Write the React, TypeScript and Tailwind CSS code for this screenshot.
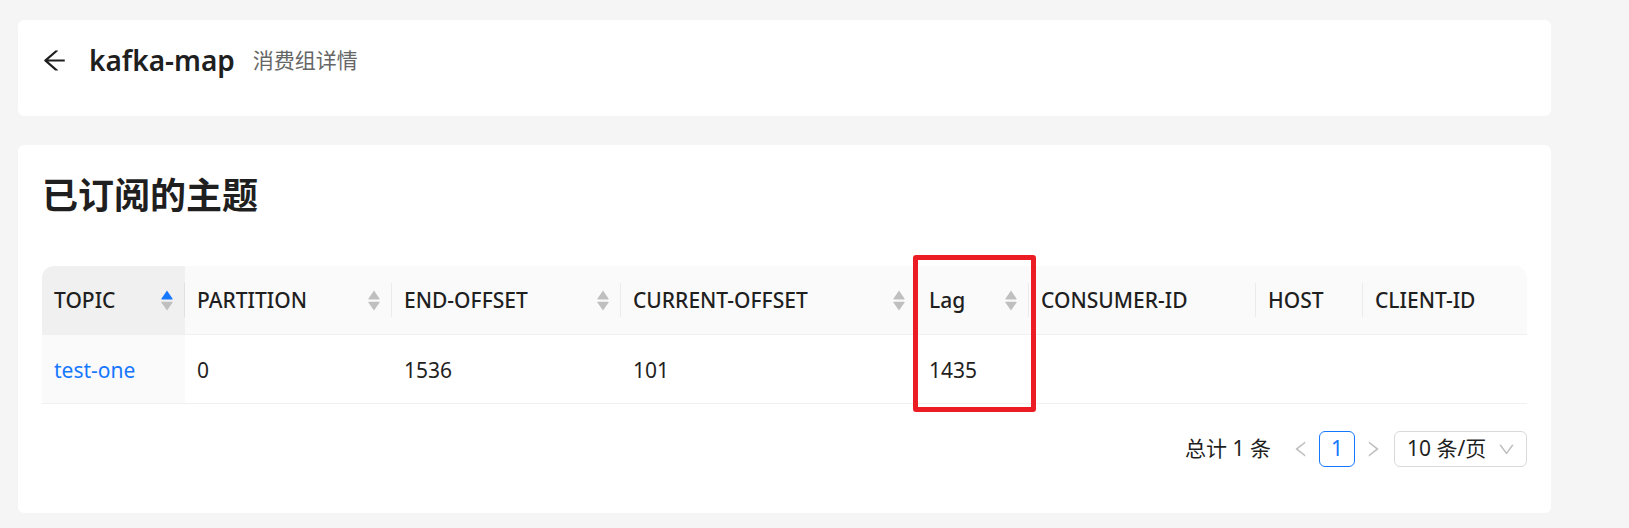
import React from "react";

const cols = [
  { key: "TOPIC", sort: "up" },
  { key: "PARTITION", sort: "none" },
  { key: "END-OFFSET", sort: "none" },
  { key: "CURRENT-OFFSET", sort: "none" },
  { key: "Lag", sort: "none" },
  { key: "CONSUMER-ID" },
  { key: "HOST" },
  { key: "CLIENT-ID" },
];

function SortIcon({ active }: { active?: boolean }) {
  return (
    <svg width="12" height="21" viewBox="0 0 12 21" className="shrink-0">
      <path d="M6 0.6 L11.6 8.8 Q11.9 9.4 11.2 9.4 L0.8 9.4 Q0.1 9.4 0.4 8.8 Z" fill={active ? "#1677ff" : "#bfbfbf"} />
      <path d="M0.8 11.8 L11.2 11.8 Q11.9 11.8 11.6 12.4 L6 20.5 L0.4 12.4 Q0.1 11.8 0.8 11.8 Z" fill="#bfbfbf" />
    </svg>
  );
}

export default function App() {
  return (
    <div className="min-h-screen w-full bg-[#f5f5f5] pt-[20px] font-['Noto_Sans','Noto_Sans_CJK_SC',sans-serif] text-[#1f1f1f]">
      <div className="ml-[18px] w-[1533px]">
        {/* Header card */}
        <div className="h-[96px] rounded-[6px] bg-white px-[24px] pt-[24px]">
          <div className="flex h-[32px] items-center">
            <svg width="25" height="25" viewBox="64 64 896 896" className="mr-[22px] shrink-0" fill="#1f1f1f">
              <path d="M872 474H286.9l350.3-304c5.6-4.9 2.2-14-5.2-14h-88.5c-3.9 0-7.6 1.4-10.5 3.9L155 487.8a31.96 31.96 0 000 48.3L535.1 866c1.5 1.3 3.3 2 5.2 2h91.5c7.4 0 10.8-9.2 5.2-14L286.9 550H872c4.4 0 8-3.6 8-8v-60c0-4.4-3.6-8-8-8z" />
            </svg>
            <span className="text-[28px] font-semibold leading-[32px]">kafka-map</span>
            <span className="ml-[18px] text-[21px] leading-[32px] text-[#666666]">消费组详情</span>
          </div>
        </div>

        {/* Content card */}
        <div className="mt-[29px] rounded-[6px] bg-white px-[24px] pb-[46px] pt-[24px]">
          <div className="text-[36px] font-bold leading-[54px]">已订阅的主题</div>

          <div className="relative mt-[43px]">
            <div className="grid grid-cols-[143px_207px_229px_296px_112px_227px_107px_1fr] text-[21px] leading-[33px]">
              {cols.map((c, i) => (
                <div
                  key={c.key}
                  className={`relative flex h-[69px] items-center justify-between border-b border-[#f0f0f0] px-[12px] pt-[1px] font-medium ${
                    i === 0 ? "rounded-tl-[12px] bg-[#f0f0f0]" : "bg-[#fafafa]"
                  } ${i === cols.length - 1 ? "rounded-tr-[12px]" : ""}`}
                >
                  <span>{c.key}</span>
                  {c.sort && <SortIcon active={c.sort === "up"} />}
                  {i < cols.length - 1 && (
                    <span className="absolute right-0 top-1/2 h-[34px] w-px -translate-y-1/2 bg-[#0000000f]" />
                  )}
                </div>
              ))}
              <div className="flex h-[69px] items-center border-b border-[#f0f0f0] bg-[#fafafa] px-[12px] pt-[3px] text-[#1677ff]">test-one</div>
              <div className="flex h-[69px] items-center border-b border-[#f0f0f0] px-[12px] pt-[3px]">0</div>
              <div className="flex h-[69px] items-center border-b border-[#f0f0f0] px-[12px] pt-[3px]">1536</div>
              <div className="flex h-[69px] items-center border-b border-[#f0f0f0] px-[12px] pt-[3px]">101</div>
              <div className="flex h-[69px] items-center border-b border-[#f0f0f0] px-[12px] pt-[3px]">1435</div>
              <div className="h-[69px] border-b border-[#f0f0f0]" />
              <div className="h-[69px] border-b border-[#f0f0f0]" />
              <div className="h-[69px] border-b border-[#f0f0f0]" />
            </div>
            <div className="pointer-events-none absolute left-[871px] top-[-11px] h-[157px] w-[123px] rounded-[3px] border-[5px] border-[#ec1c24]" />
          </div>

          <div className="mt-[27px] flex h-[36px] items-center justify-end text-[21px]">
            <span className="mr-[12px]">总计 1 条</span>
            <div className="flex h-[36px] w-[36px] items-center justify-center">
              <svg width="18" height="18" viewBox="64 64 896 896" fill="#bfbfbf">
                <path d="M724 218.3V141c0-6.7-7.7-10.4-12.9-6.3L260.3 486.8a31.86 31.86 0 000 50.3l450.8 352.1c5.3 4.1 12.9.4 12.9-6.3v-77.3c0-4.9-2.3-9.6-6.1-12.6l-360-281 360-281.1c3.8-3 6.1-7.7 6.1-12.6z" />
              </svg>
            </div>
            <div className="flex h-[36px] w-[36px] items-center justify-center rounded-[6px] border border-[#1677ff] text-[#1677ff]">1</div>
            <div className="flex h-[36px] w-[36px] items-center justify-center">
              <svg width="18" height="18" viewBox="64 64 896 896" fill="#bfbfbf">
                <path d="M765.7 486.8L314.9 134.7A7.97 7.97 0 00302 141v77.3c0 4.9 2.3 9.6 6.1 12.6l360 281.1-360 281.1c-3.8 3-6.1 7.7-6.1 12.6V883c0 6.6 7.6 10.3 12.9 6.3l450.8-352.1a31.96 31.96 0 000-50.4z" />
              </svg>
            </div>
            <div className="ml-[3px] flex h-[36px] w-[133px] items-center justify-between rounded-[6px] border border-[#d9d9d9] pl-[12px] pr-[11px]">
              <span>10 条/页</span>
              <svg width="17" height="17" viewBox="64 64 896 896" fill="#bfbfbf">
                <path d="M884 256h-75c-5.1 0-9.9 2.5-12.9 6.6L512 654.2 227.9 262.6c-3-4.1-7.8-6.6-12.9-6.6h-75c-6.5 0-10.3 7.4-6.5 12.7l352.6 486.1c12.8 17.6 39 17.6 51.7 0l352.6-486.1c3.9-5.3.1-12.7-6.4-12.7z" />
              </svg>
            </div>
          </div>
        </div>
      </div>
    </div>
  );
}
